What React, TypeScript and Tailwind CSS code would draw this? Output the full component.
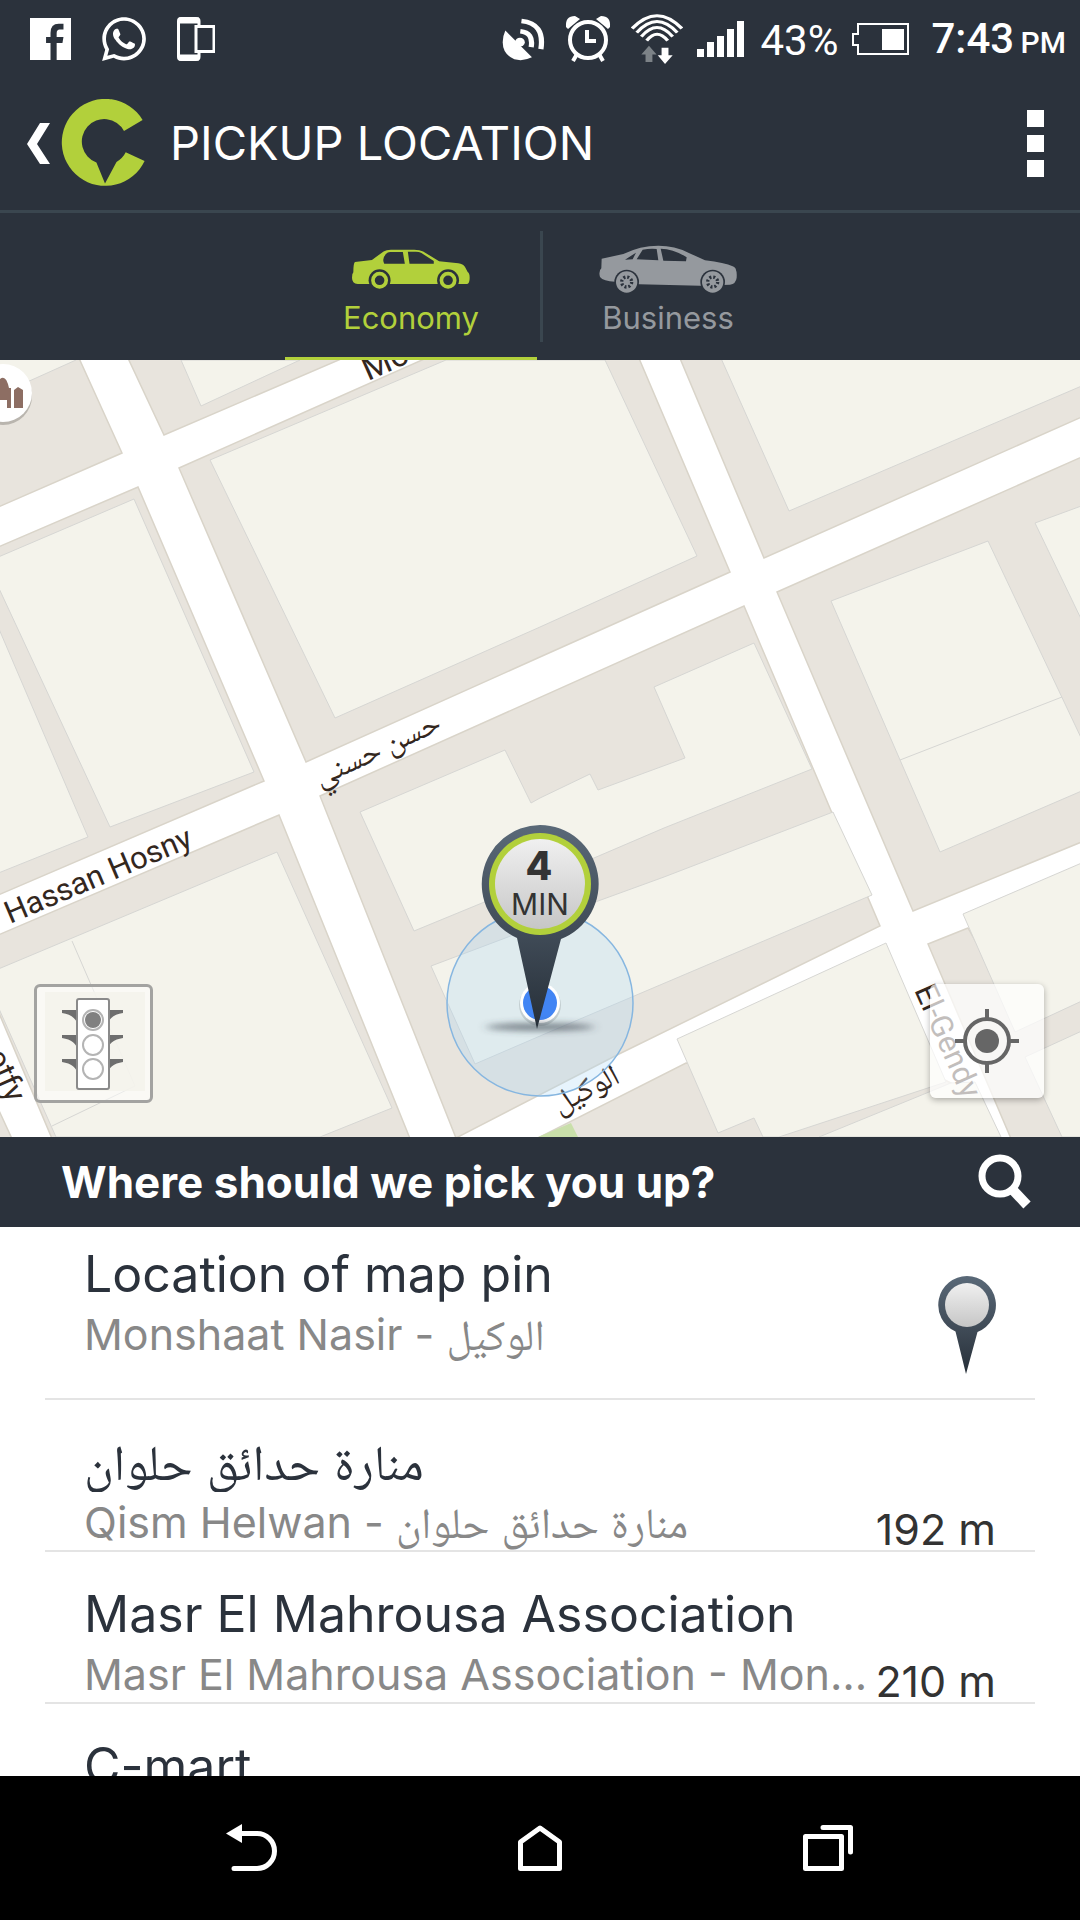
import type { ReactNode } from 'react';
import { FaWhatsapp } from 'react-icons/fa';

const BUILDINGS = [
  '-4,-4 78,-4 76,0 -4,36',
  '181,0 201,46 300,0',
  '210,100 446,0 605,0 697,196 540,267 335,358',
  '-4,198 134,139 254,412 110,467 -4,222',
  '-4,262 88,477 -4,514',
  '-4,610 277,492 392,748 320,777 56,777 -4,642',
  '360,452 505,390 531,443 540,438 590,414 598,430 685,398 654,327 754,283 812,409 664,468 594,498 482,543 414,571',
  '431,606 508,577 598,541 664,517 833,452 872,535 540,676 475,704',
  '677,679 886,583 946,722 779,777 763,777 754,758 718,773',
  '819,777 951,723 975,722 1001,777',
  '963,554 1084,502 1084,640 1015,672',
  '1025,697 1084,670 1084,777 1062,777',
  '831,241 988,181 1084,384 1084,430 940,492',
  '1035,163 1084,145 1084,265',
  '720,-4 789,151 1084,25 1084,-4',
];

const BLOCKS = [
  '-4,-4 78,-4 122,93 -4,148',
  '127,-4 164,75 348,-4',
  '179,108 431,-4 638,-4 730,212 540,297 306,402',
  '-4,188 138,127 264,421 -4,536',
  '-4,576 279,455 411,781 53,781 -4,646',
  '-4,744 13,781 -4,781',
  '320,436 744,246 880,566 617,695 456,778',
  '532,781 686,703 945,720 951,723 830,781',
  '928,584 968,568 1020,660 1084,638 1084,680 1066,781 1012,781',
  '777,232 1084,96 1084,481 913,551',
  '679,-4 764,198 1084,56 1084,-4',
];

function PinDefs({ id }: { id: string }) {
  return (
    <defs>
      <linearGradient id={`${id}-shell`} x1="0" y1="0" x2="0" y2="1">
        <stop offset="0" stopColor="#5a6978" />
        <stop offset="0.55" stopColor="#3f4a56" />
        <stop offset="1" stopColor="#262f38" />
      </linearGradient>
      <linearGradient id={`${id}-face`} x1="0" y1="0" x2="0" y2="1">
        <stop offset="0" stopColor="#f0f0f0" />
        <stop offset="1" stopColor="#c6c6c6" />
      </linearGradient>
      <filter id={`${id}-soft`} x="-20%" y="-150%" width="140%" height="400%">
        <feGaussianBlur stdDeviation="5 3" />
      </filter>
    </defs>
  );
}

function CityMap() {
  return (
    <svg
      className="absolute inset-0 h-full w-full"
      viewBox="0 0 1080 777"
      preserveAspectRatio="xMidYMid slice"
      role="img"
      aria-label="Map around the pickup pin"
    >
      <PinDefs id="map" />
      <rect width="1080" height="777" fill="#ffffff" />
      {BLOCKS.map((p) => (
        <polygon key={p} points={p} fill="#e8e4dd" stroke="#d9d4c9" strokeWidth="1.5" />
      ))}
      {BUILDINGS.map((p) => (
        <polygon key={p} points={p} fill="#f4f3eb" stroke="#d6d6d3" strokeWidth="1" />
      ))}
      <path d="M72 581L135 726L52 766M900 400L1062 337" fill="none" stroke="#d6d6d3" />
      <polygon points="538,777 571,763 578,777" fill="#c9dfaa" />

      <circle cx="3" cy="36" r="29" fill="#b9b5ae" />
      <circle cx="3" cy="33" r="29" fill="#ffffff" />
      <path d="M0 40V19Q6 14 9 28H11V48H7V40ZM14 48V30L18 27L23 30V48Z" fill="#8d6e63" />

      <g fill="#33271e" fontFamily="Roboto, sans-serif" fontSize="31">
        <text transform="translate(368 21) rotate(-24)" fontSize="33">Mod</text>
        <text transform="translate(10 564) rotate(-23)">Hassan Hosny</text>
        <text transform="translate(-14 695) rotate(66)">otfy</text>
        <text transform="translate(914 630) rotate(66)">El-Gendy</text>
      </g>
      <g
        fill="#33271e"
        fontFamily="'Noto Naskh Arabic', 'Noto Sans Arabic', 'DejaVu Sans', sans-serif"
        fontSize="31"
        textAnchor="middle"
      >
        <text transform="translate(381 398) rotate(-25)">حسن حسني</text>
        <text transform="translate(590 738) rotate(-27)">الوكيل</text>
      </g>

      <circle cx="540" cy="643" r="93" fill="#a9d6f7" fillOpacity="0.28" stroke="#86b6e0" strokeWidth="1.5" />
      <circle cx="540" cy="645" r="21" fill="#000000" fillOpacity="0.12" />
      <circle cx="540" cy="643" r="20" fill="#ffffff" />
      <circle cx="540" cy="643" r="17" fill="#4285f4" />
      <ellipse cx="540" cy="667" rx="54" ry="4" fill="#3c464e" fillOpacity="0.6" filter="url(#map-soft)" />
      <path
        d="M540 465A59 59 0 0 1 561 579L537 669L517 578A59 59 0 0 1 540 465Z"
        fill="url(#map-shell)"
      />
      <circle cx="540" cy="524" r="51" fill="#b2d03b" />
      <circle cx="540" cy="524" r="45" fill="url(#map-face)" />
      <g fill="#333333" fontFamily="Inter, sans-serif" textAnchor="middle">
        <text x="539" y="520" fontSize="39" fontWeight="800">4</text>
        <text x="540" y="555" fontSize="30">MIN</text>
      </g>
    </svg>
  );
}

function StatusBar() {
  return (
    <div className="flex items-center justify-between pt-[10px] pr-[14px] pl-[30px] font-[Roboto,sans-serif] text-white">
      <div className="flex items-center gap-7">
        <svg width="41" height="42" viewBox="88 51 120 123" preserveAspectRatio="none" aria-label="Facebook">
          <path
            fillRule="evenodd"
            fill="currentColor"
            d="M88 51H208V174H166V124H183L186 107H166V96Q166 85 175 85H186V68H172Q148 68 148 95V107H135V124H148V174H88Z"
          />
        </svg>
        <FaWhatsapp className="size-[50px]" aria-label="WhatsApp" />
        <svg width="38" height="44" viewBox="0 0 38 44" fill="none" stroke="currentColor" aria-label="Devices">
          <path d="M22 8V4Q22 1.500 19 1.500H4Q1.500 1.500 1.500 4V40Q1.500 42.500 4 42.500H19Q22 42.500 22 40V36" strokeWidth="3" />
          <path d="M2 3.500H22M2 40.500H22" strokeWidth="6" />
          <rect x="19" y="9.500" width="18" height="25" strokeWidth="3" />
        </svg>
      </div>
      <div className="flex items-center">
        <svg width="43" height="43" viewBox="55 46 115 130" preserveAspectRatio="none" aria-label="Location active">
          <path fill="currentColor" d="M64 84L135 165Q112 178 88 171Q56 155 57 118Q58 98 64 84Z" />
          <circle cx="103" cy="119" r="13" fill="currentColor" />
          <path d="M104 86Q140 90 133 134M107 55Q170 62 159 140" fill="none" stroke="currentColor" strokeWidth="14" />
        </svg>
        <svg className="ml-5" width="46" height="46" viewBox="0 0 46 46" fill="none" stroke="currentColor" aria-label="Alarm set">
          <circle cx="23" cy="24" r="18" strokeWidth="4" />
          <path d="M22 14V25H31" strokeWidth="4" />
          <path d="M12 38L8 45M34 38L38 45" strokeWidth="4" />
          <path d="M1 11Q0 0 10 0L15 3L3 13ZM45 11Q46 0 36 0L31 3L43 13Z" fill="currentColor" stroke="none" />
        </svg>
        <svg className="ml-5" width="52" height="50" viewBox="396 38 136 148" preserveAspectRatio="none" aria-label="Wi-Fi">
          <path
            d="M399 81Q464 5 529 81M411 93Q464 27 517 93M423 105Q464 51 505 105M437 117Q464 79 492 117"
            fill="none"
            stroke="currentColor"
            strokeWidth="9"
          />
          <path d="M443 132L463 158H452V180H434V158H423Z" fill="#7c8287" />
          <path d="M485 186L505 160H494V138H476V160H466Z" fill="currentColor" />
        </svg>
        <svg className="ml-[14px]" width="47" height="36" viewBox="0 0 47 36" fill="currentColor" aria-label="Signal">
          <path d="M0 28H7V36H0ZM10 21H17V36H10ZM20 15H27V36H20ZM30 8H37V36H30ZM40 0H47V36H40Z" />
        </svg>
        <span className="ml-4 pt-1 text-[42px] leading-[50px]">43%</span>
        <svg className="ml-[14px]" width="57" height="32" viewBox="0 0 57 32" aria-label="Battery">
          <path d="M6 1H56V31H6V22H1V11H6Z" fill="none" stroke="currentColor" strokeWidth="2" />
          <rect x="30" y="6" width="22" height="21" fill="currentColor" />
        </svg>
        <span className="ml-[22px] pt-1 text-[42px] leading-[50px] font-medium">
          7:43 <span className="-ml-1 text-[30px]">PM</span>
        </span>
      </div>
    </div>
  );
}

function Header() {
  return (
    <header className="flex items-center pt-[25px] pr-9 pb-[17px] pl-[27px] text-white">
      <button type="button" aria-label="Back" className="flex h-[100px] items-center gap-[11px]">
        <svg width="23" height="41" viewBox="0 0 23 41" fill="currentColor">
          <path d="M13 0H23L10 21L23 41H13L0 21Z" />
        </svg>
        <svg width="85" height="88" viewBox="61 99 85 88">
          <path
            fill="#b2d03b"
            d="M142.600 120A43.500 43.500 0 1 0 144.600 161L125.700 152.300Q123 158 116.500 162L105 183.500L96.400 162.500A22.400 22.400 0 1 1 124 131Z"
          />
        </svg>
      </button>
      <h1 className="ml-6 flex-1 text-[47px] leading-[56px]">PICKUP LOCATION</h1>
      <button type="button" aria-label="More options" className="flex flex-col gap-2">
        <span className="size-[17px] bg-white" />
        <span className="size-[17px] bg-white" />
        <span className="size-[17px] bg-white" />
      </button>
    </header>
  );
}

function EconomyCar() {
  return (
    <svg width="118" height="40" viewBox="243 118 355 120">
      <path
        fill="currentColor"
        d="M252 157L303 151L338 125Q346 120 360 120H430Q447 120 457 125L505 155L563 161Q577 163 583 172L591 187Q597 190 597 204Q597 222 589 223H260Q243 222 243 204Q243 192 247 188Q247 160 252 157Z"
      />
      <path fill="#2b323c" d="M358 127H396L402 162H340Q332 148 345 133Q350 127 358 127ZM411 126H435Q445 126 452 130L489 154V162H416Z" />
      <circle cx="326" cy="212" r="33" fill="#2b323c" />
      <circle cx="532" cy="212" r="33" fill="#2b323c" />
      <circle cx="326" cy="212" r="20" fill="none" stroke="currentColor" strokeWidth="11" />
      <circle cx="532" cy="212" r="20" fill="none" stroke="currentColor" strokeWidth="11" />
    </svg>
  );
}

function BusinessCar() {
  return (
    <svg width="138" height="48" viewBox="987 112 414 144">
      <path
        fill="currentColor"
        d="M995 153L1060 139Q1110 114 1165 114Q1215 114 1255 135L1305 158Q1365 165 1388 176Q1398 180 1398 188Q1401 192 1400 210Q1398 228 1380 231L1290 234L1108 230L1035 222Q1000 221 990 208Q985 190 994 182Z"
      />
      <path fill="#2b323c" d="M1065 156L1098 135L1088 155ZM1118 126Q1140 122 1160 124L1165 158L1100 155ZM1172 123Q1212 124 1250 149L1248 161L1180 159Z" />
      <circle cx="1070" cy="223" r="37" fill="#2b323c" />
      <circle cx="1328" cy="223" r="37" fill="#2b323c" />
      <circle cx="1070" cy="223" r="32" fill="currentColor" />
      <circle cx="1328" cy="223" r="32" fill="currentColor" />
      <g fill="none" stroke="#2b323c" strokeWidth="10" strokeDasharray="6 5.780">
        <circle cx="1070" cy="223" r="15" />
        <circle cx="1328" cy="223" r="15" />
      </g>
    </svg>
  );
}

function CarTabs() {
  return (
    <nav aria-label="Car type" className="flex justify-center gap-[3px] border-t-[3px] border-[#3a464f] pl-[3px]">
      <button type="button" aria-pressed="true" className="flex w-[252px] flex-col items-center border-b-[3px] border-[#b2d03b] pt-5 text-[#b2d03b]">
        <span className="flex h-16 items-center pt-2">
          <EconomyCar />
        </span>
        <span className="pb-[18px] text-[31px] leading-[42px]">Economy</span>
      </button>
      <span className="my-[18px] w-[3px] bg-[#3a464f]" />
      <button type="button" aria-pressed="false" className="flex w-[252px] flex-col items-center border-b-[3px] border-transparent pt-5 pr-2 text-[#95999e]">
        <span className="flex h-16 items-center pt-2">
          <BusinessCar />
        </span>
        <span className="pb-[18px] text-[31px] leading-[42px]">Business</span>
      </button>
    </nav>
  );
}

function TrafficButton() {
  return (
    <button
      type="button"
      aria-label="Toggle traffic"
      className="absolute bottom-[34px] left-[34px] rounded-md border-[3px] border-[#a3a3a1] bg-white/50"
    >
      <svg width="113" height="113" viewBox="3 3 113 113">
        <rect x="11" y="8" width="100" height="99" fill="#f4f3eb" fillOpacity="0.8" />
        <g fill="#6e6e6e">
          <path d="M28 26H44V42Q42 31 28 29ZM28 51H44V67Q42 56 28 54ZM28 75H44V91Q42 80 28 78Z" />
          <path d="M89 26H73V42Q75 31 89 29ZM89 51H73V67Q75 56 89 54ZM89 75H73V91Q75 80 89 78Z" />
        </g>
        <rect x="43" y="15" width="32" height="90" rx="2" fill="#ffffff" stroke="#8a8a8a" strokeWidth="2" />
        <g fill="#ffffff" stroke="#b4b4b4" strokeWidth="2">
          <circle cx="59" cy="36" r="10" />
          <circle cx="59" cy="61" r="10" />
          <circle cx="59" cy="85" r="10" />
        </g>
        <circle cx="59" cy="36" r="8" fill="#808080" />
      </svg>
    </button>
  );
}

function LocateButton() {
  return (
    <button
      type="button"
      aria-label="Center on my location"
      className="absolute right-9 bottom-[39px] rounded-md bg-white/70 shadow-[0_2px_6px_rgba(0,0,0,0.3)]"
    >
      <svg width="114" height="114" viewBox="0 0 114 114" stroke="#666666" fill="none">
        <circle cx="57" cy="57" r="22" strokeWidth="4" />
        <circle cx="57" cy="57" r="12" fill="#666666" stroke="none" />
        <path d="M57 25V35M57 79V89M25 57H35M79 57H89" strokeWidth="4" />
      </svg>
    </button>
  );
}

function MapPin() {
  return (
    <svg width="58" height="98" viewBox="0 0 58 98" aria-hidden="true">
      <PinDefs id="row" />
      <path d="M29 0A29 29 0 0 1 39.500 56L28 98L17.500 55.500A29 29 0 0 1 29 0Z" fill="url(#row-shell)" />
      <circle cx="29" cy="29" r="22" fill="url(#row-face)" />
    </svg>
  );
}

function PlaceText({ title, detail }: { title: string; detail: ReactNode }) {
  return (
    <span className="flex min-w-0 flex-1 flex-col gap-[2px]">
      <span className="truncate text-[50px] leading-[60px] text-[#2b323c]">{title}</span>
      <span className="truncate text-[43px] leading-[56px] text-[#888888]">{detail}</span>
    </span>
  );
}

function PinPlace({ title, detail }: { title: string; detail: ReactNode }) {
  return (
    <li className="border-b-2 border-[#e4e4e4]">
      <button type="button" className="flex w-full items-start pt-[17px] pr-[39px] pb-6 pl-[39px] text-left">
        <PlaceText title={title} detail={detail} />
        <span className="pt-8">
          <MapPin />
        </span>
      </button>
    </li>
  );
}

function Place({ title, detail, distance }: { title: string; detail: ReactNode; distance: string }) {
  return (
    <li className="border-b-2 border-[#e4e4e4]">
      <button type="button" className="flex w-full items-end gap-2 pt-8 pr-[39px] pl-[39px] text-left">
        <PlaceText title={title} detail={detail} />
        <span className="text-[43px] leading-[42px] text-[#333333]">{distance}</span>
      </button>
    </li>
  );
}

export default function App() {
  return (
    <div className="flex h-screen flex-col overflow-hidden bg-white font-[Inter,'Noto_Naskh_Arabic','Noto_Sans_Arabic','DejaVu_Sans',sans-serif]">
      <div className="bg-[#2b323c]">
        <StatusBar />
        <Header />
        <CarTabs />
      </div>
      <main className="flex min-h-0 flex-1 flex-col">
        <section className="relative min-h-0 flex-[777] overflow-hidden">
          <CityMap />
          <TrafficButton />
          <LocateButton />
        </section>
        <div className="flex items-center justify-between bg-[#2b323c] py-4 pr-12 pl-[61px] text-white">
          <h2 className="text-[44px] leading-[58px] font-bold">Where should we pick you up?</h2>
          <button type="button" aria-label="Search">
            <svg width="54" height="56" viewBox="0 0 54 56" fill="none" stroke="currentColor">
              <circle cx="22" cy="22" r="18" strokeWidth="7" />
              <path d="M34 35L49 51" strokeWidth="10" />
            </svg>
          </button>
        </div>
        <ul className="min-h-0 flex-[549] overflow-y-auto px-[45px] [scrollbar-width:none]">
          <PinPlace title="Location of map pin" detail="Monshaat Nasir - الوكيل" />
          <Place title="منارة حدائق حلوان" detail="Qism Helwan - منارة حدائق حلوان" distance="192 m" />
          <Place title="Masr El Mahrousa Association" detail="Masr El Mahrousa Association - Monshaat Nasir" distance="210 m" />
          <Place title="C-mart" detail="C-mart - Monshaat Nasir" distance="230 m" />
        </ul>
      </main>
      <nav aria-label="System" className="flex bg-black px-[10%] py-12 text-white">
        <button type="button" aria-label="Back" className="flex flex-1 justify-center">
          <svg width="52" height="48" viewBox="0 0 52 48" fill="none" stroke="currentColor">
            <path d="M14 9.500H31A17.500 17.500 0 0 1 31 44.500H8" strokeWidth="5" strokeLinecap="round" />
            <path d="M0 9.500L16 0V19Z" fill="currentColor" stroke="none" />
          </svg>
        </button>
        <button type="button" aria-label="Home" className="flex flex-1 justify-center">
          <svg width="46" height="48" viewBox="0 0 46 48" fill="none" stroke="currentColor" strokeWidth="5" strokeLinejoin="round">
            <path d="M3.500 18L23 4L42.500 18V44.500H3.500Z" />
          </svg>
        </button>
        <button type="button" aria-label="Recent apps" className="flex flex-1 justify-center">
          <svg width="52" height="48" viewBox="0 0 52 48" fill="none" stroke="currentColor" strokeWidth="5" strokeLinejoin="round" strokeLinecap="round">
            <rect x="3.500" y="12.500" width="36" height="32" />
            <path d="M21 3.500H48.500V28" />
          </svg>
        </button>
      </nav>
    </div>
  );
}
